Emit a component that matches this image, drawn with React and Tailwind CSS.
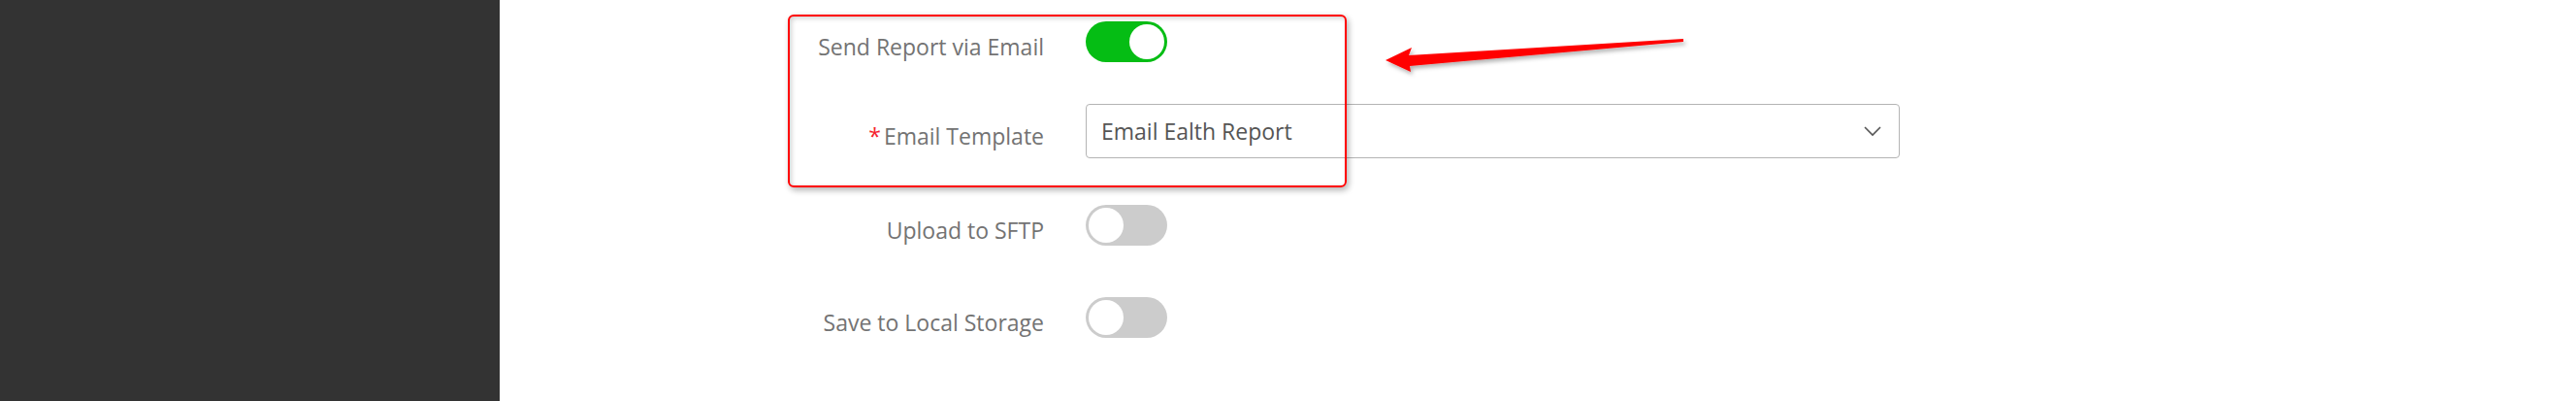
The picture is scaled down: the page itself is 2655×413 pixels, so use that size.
import React from 'react';

const Toggle = ({ on }) => (
  <div
    className={`flex h-[42px] w-[84px] items-center rounded-full p-[3px] ${on ? 'justify-end bg-[#05bd14]' : 'justify-start bg-[#cccccc]'}`}
  >
    <div className="h-[36px] w-[36px] rounded-full bg-white" />
  </div>
);

const Row = ({ label, required, children, className }) => (
  <div className={`flex h-[56px] items-center ${className}`}>
    <div className="w-[261px] shrink-0 pt-[10px] text-right text-[23px] text-[#737373]">
      {required && <span className="mr-[3px] text-[#f5222d]">*</span>}
      {label}
    </div>
    <div className="ml-[43px] flex items-center">{children}</div>
  </div>
);

export default function App() {
  return (
    <div
      className="relative flex h-[413px] w-[2655px] overflow-hidden bg-white"
      style={{ fontFamily: '"Open Sans", "Noto Sans", sans-serif' }}
    >
      <aside className="h-full w-[515px] shrink-0 bg-[#333333]" />

      <main className="flex-1 pl-[300px] pt-[15px]">
        <Row label="Send Report via Email">
          <Toggle on />
        </Row>

        <Row label="Email Template" required className="mt-[36px]">
          <div className="flex h-[56px] w-[839px] items-center justify-between rounded-[4px] border border-[#b4b4b4] pl-[15px] pr-[18px] text-[23px] text-[#555555]">
            <span>Email Ealth Report</span>
            <svg width="18" height="11" viewBox="0 0 18 11" fill="none">
              <path d="M1 1l8 8 8-8" stroke="#555" strokeWidth="1.6" />
            </svg>
          </div>
        </Row>

        <Row label="Upload to SFTP" className="mt-[41px]">
          <Toggle />
        </Row>

        <Row label="Save to Local Storage" className="mt-[39px]">
          <Toggle />
        </Row>
      </main>

      {/* annotation box */}
      <div className="pointer-events-none absolute left-[812px] top-[15px] h-[178px] w-[576px] rounded-[6px] border-2 border-[#ff0000] shadow-[2px_3px_6px_rgba(0,0,0,0.3),inset_2px_2px_5px_rgba(0,0,0,0.18)]" />

      {/* annotation arrow */}
      <svg
        className="pointer-events-none absolute left-[1420px] top-[32px]"
        width="330"
        height="50"
        viewBox="1420 32 330 50"
      >
        <defs>
          <filter id="sh" x="-10%" y="-50%" width="120%" height="200%">
            <feDropShadow dx="2" dy="3" stdDeviation="2" floodColor="#000" floodOpacity="0.3" />
          </filter>
        </defs>
        <path
          d="M1428 62 L1455 49 L1452 57 L1735 40 L1735 43 L1453 68 L1454 74 Z"
          fill="#ff0000"
          filter="url(#sh)"
        />
      </svg>
    </div>
  );
}
